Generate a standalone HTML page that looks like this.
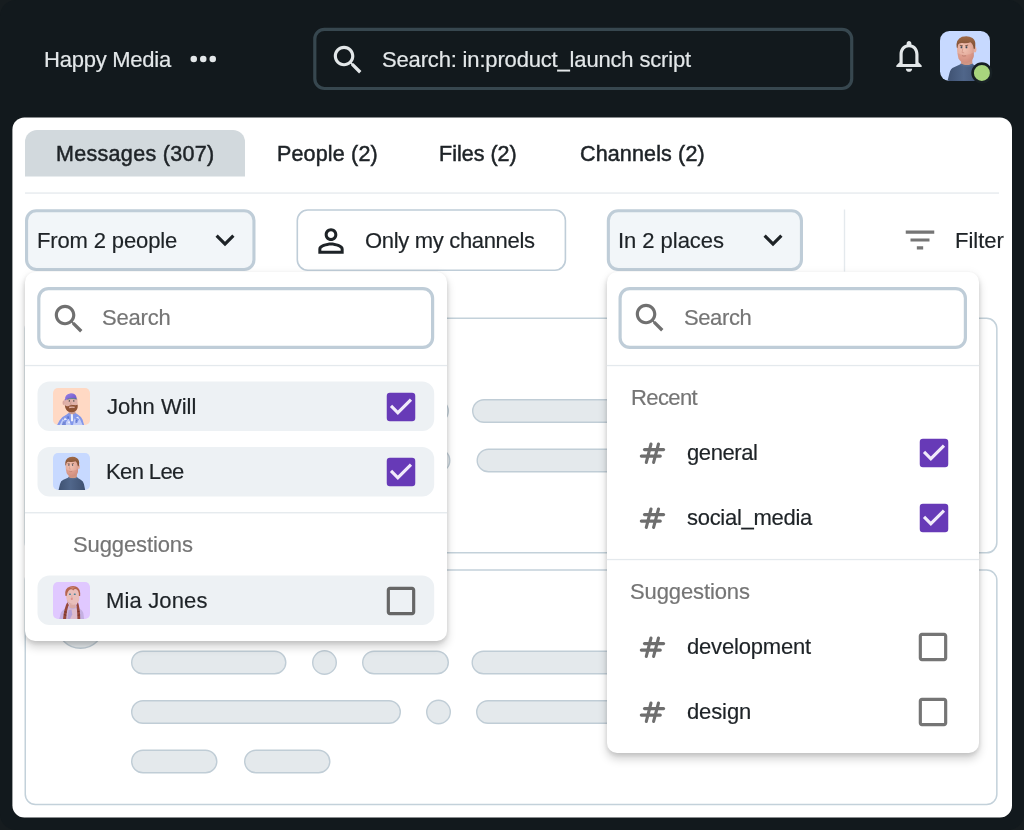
<!DOCTYPE html>
<html><head><meta charset="utf-8"><title>Search</title>
<style>
html,body{margin:0;padding:0;}
body{width:1024px;height:830px;position:relative;overflow:hidden;background:#161c1f;font-family:'Liberation Sans',sans-serif;}
.a{position:absolute;box-sizing:border-box;}
.t{position:absolute;will-change:transform;white-space:pre;line-height:26px;font-family:'Liberation Sans',sans-serif;}
svg{position:absolute;overflow:visible;}
.L{left:0;top:0;width:1024px;height:830px;}
.dd{position:absolute;box-sizing:border-box;background:#fff;border-radius:10px;box-shadow:0 6px 10px rgba(0,0,0,.18),0 2px 5px rgba(0,0,0,.09),0 0 8px rgba(0,0,0,.05);}

</style></head>
<body>
<svg class="L" viewBox="0 0 1024 830"><rect x="0" y="0" width="1024" height="830" rx="16" fill="#12191d"/>
<rect x="314.80" y="29.40" width="536.90" height="59.10" rx="9.70" fill="none" stroke="#37474f" stroke-width="3.2"/>
<circle cx="193.75" cy="59" r="3.25" fill="#e3e7e9"/>
<circle cx="203.25" cy="59" r="3.25" fill="#e3e7e9"/>
<circle cx="212.75" cy="59" r="3.25" fill="#e3e7e9"/>
<rect x="12.4" y="117.6" width="999.6" height="700" rx="12" fill="#fff"/>
<path d="M25 176.6V142a12 12 0 0 1 12-12H233a12 12 0 0 1 12 12V176.6Z" fill="#d2d9dd"/>
<rect x="25" y="192.4" width="974" height="1.3" fill="#e4e9ed"/>
<rect x="26.55" y="210.75" width="227.40" height="58.70" rx="9.75" fill="#f2f6f9" stroke="#bfcdd8" stroke-width="3.1"/>
<rect x="297.30" y="210.00" width="268.10" height="60.20" rx="10.50" fill="#fff" stroke="#bfcdd8" stroke-width="1.6"/>
<rect x="608.35" y="210.75" width="193.10" height="58.70" rx="9.75" fill="#f2f6f9" stroke="#bfcdd8" stroke-width="3.1"/>
<rect x="843.8" y="209.5" width="1.4" height="62" fill="#e4e9ed"/>
<rect x="25.25" y="318.35" width="971.60" height="234.50" rx="10.25" fill="#fff" stroke="#c3d1da" stroke-width="1.5"/>
<rect x="25.25" y="569.95" width="971.60" height="234.50" rx="10.25" fill="#fff" stroke="#c3d1da" stroke-width="1.5"/>
<rect x="424.70" y="399.20" width="23.60" height="23.60" rx="11.80" fill="#e4e9ec" stroke="#c0cdd6" stroke-width="1.4"/>
<rect x="472.70" y="399.70" width="406.60" height="22.60" rx="11.30" fill="#e4e9ec" stroke="#c0cdd6" stroke-width="1.4"/>
<rect x="426.20" y="448.70" width="23.60" height="23.60" rx="11.80" fill="#e4e9ec" stroke="#c0cdd6" stroke-width="1.4"/>
<rect x="477.20" y="449.20" width="402.10" height="22.60" rx="11.30" fill="#e4e9ec" stroke="#c0cdd6" stroke-width="1.4"/>
<rect x="57.20" y="601.70" width="46.60" height="46.60" rx="23.30" fill="#e4e9ec" stroke="#c0cdd6" stroke-width="1.4"/>
<rect x="131.70" y="651.20" width="154.10" height="22.60" rx="11.30" fill="#e4e9ec" stroke="#c0cdd6" stroke-width="1.4"/>
<rect x="312.70" y="650.70" width="23.60" height="23.60" rx="11.80" fill="#e4e9ec" stroke="#c0cdd6" stroke-width="1.4"/>
<rect x="362.70" y="651.20" width="85.60" height="22.60" rx="11.30" fill="#e4e9ec" stroke="#c0cdd6" stroke-width="1.4"/>
<rect x="472.20" y="651.20" width="327.10" height="22.60" rx="11.30" fill="#e4e9ec" stroke="#c0cdd6" stroke-width="1.4"/>
<rect x="131.70" y="700.70" width="268.60" height="22.60" rx="11.30" fill="#e4e9ec" stroke="#c0cdd6" stroke-width="1.4"/>
<rect x="426.70" y="700.20" width="23.60" height="23.60" rx="11.80" fill="#e4e9ec" stroke="#c0cdd6" stroke-width="1.4"/>
<rect x="476.70" y="700.70" width="322.60" height="22.60" rx="11.30" fill="#e4e9ec" stroke="#c0cdd6" stroke-width="1.4"/>
<rect x="131.70" y="750.20" width="85.10" height="22.60" rx="11.30" fill="#e4e9ec" stroke="#c0cdd6" stroke-width="1.4"/>
<rect x="244.70" y="750.20" width="85.10" height="22.60" rx="11.30" fill="#e4e9ec" stroke="#c0cdd6" stroke-width="1.4"/></svg>
<span class="t" style="left:43.50px;top:46.50px;font-size:22px;letter-spacing:-0.239px;color:#e3e7e9;-webkit-text-stroke:0.2px #e3e7e9;">Happy Media</span><span class="t" style="left:381.50px;top:46.50px;font-size:22px;letter-spacing:-0.167px;color:#e3e7e9;-webkit-text-stroke:0.2px #e3e7e9;">Search: in:product_launch script</span>
<svg style="left:328.5px;top:40.5px" width="38" height="38" viewBox="0 0 24 24"><path fill="#e3e7e9" d="M15.5 14h-.79l-.28-.27C15.41 12.59 16 11.11 16 9.5 16 5.91 13.09 3 9.5 3S3 5.91 3 9.5 5.91 16 9.5 16c1.61 0 3.09-.59 4.23-1.57l.27.28v.79l5 4.99L20.49 19l-4.99-5zm-6 0C7.01 14 5 11.99 5 9.5S7.01 5 9.5 5 14 7.01 14 9.5 11.99 14 9.5 14z"/></svg>
<svg style="left:890.2px;top:36.5px" width="38" height="38" viewBox="0 0 24 24"><path fill="#e3e7e9" d="M12 22c1.1 0 2-.9 2-2h-4c0 1.1.9 2 2 2zm6-6v-5c0-3.07-1.63-5.64-4.5-6.32V4c0-.83-.67-1.5-1.5-1.5s-1.5.67-1.5 1.5v.68C7.64 5.36 6 7.92 6 11v5l-2 2v1h16v-1l-2-2zm-2 1H8v-6c0-2.48 1.51-4.5 4-4.5s4 2.02 4 4.5v6z"/></svg>
<svg style="left:940px;top:30.6px" width="50" height="50" viewBox="0 0 50 50"><g clip-path="url(#avc)"><use href="#ken"/></g></svg>
<svg class="L" viewBox="0 0 1024 830"><circle cx="981.9" cy="72.9" r="9.3" fill="#a8d57d" stroke="#172024" stroke-width="2.6"/></svg>
<span class="t" style="left:56.00px;top:141.25px;font-size:21.5px;letter-spacing:0.308px;color:#1e2327;-webkit-text-stroke:0.5px #1e2327;">Messages (307)</span><span class="t" style="left:276.50px;top:141.25px;font-size:21.5px;letter-spacing:0.163px;color:#1e2327;-webkit-text-stroke:0.5px #1e2327;">People (2)</span><span class="t" style="left:439.00px;top:141.25px;font-size:21.5px;letter-spacing:0.002px;color:#1e2327;-webkit-text-stroke:0.5px #1e2327;">Files (2)</span><span class="t" style="left:580.00px;top:141.25px;font-size:21.5px;letter-spacing:0.143px;color:#1e2327;-webkit-text-stroke:0.5px #1e2327;">Channels (2)</span><span class="t" style="left:37.00px;top:227.50px;font-size:22px;letter-spacing:-0.135px;color:#1e2327;-webkit-text-stroke:0.2px #1e2327;">From 2 people</span><span class="t" style="left:364.50px;top:227.50px;font-size:22px;letter-spacing:-0.323px;color:#1e2327;-webkit-text-stroke:0.2px #1e2327;">Only my channels</span><span class="t" style="left:618.00px;top:227.50px;font-size:22px;letter-spacing:-0.040px;color:#1e2327;-webkit-text-stroke:0.2px #1e2327;">In 2 places</span><span class="t" style="left:954.50px;top:227.50px;font-size:22px;letter-spacing:-0.012px;color:#1e2327;-webkit-text-stroke:0.2px #1e2327;">Filter</span>
<svg style="left:206px;top:221.4px" width="38" height="38" viewBox="0 0 24 24"><path fill="#1e2327" d="M16.59 8.59L12 13.17 7.41 8.59 6 10l6 6 6-6z"/></svg>
<svg style="left:753.5px;top:221.4px" width="38" height="38" viewBox="0 0 24 24"><path fill="#1e2327" d="M16.59 8.59L12 13.17 7.41 8.59 6 10l6 6 6-6z"/></svg>
<svg style="left:311.6px;top:221.5px" width="38" height="38" viewBox="0 0 24 24"><path fill="#1e2327" d="M12 5.9c1.16 0 2.1.94 2.1 2.1s-.94 2.1-2.1 2.1S9.9 9.16 9.9 8s.94-2.1 2.1-2.1m0 9c2.97 0 6.1 1.46 6.1 2.1v1.1H5.9V17c0-.64 3.13-2.1 6.1-2.1M12 4C9.79 4 8 5.79 8 8s1.79 4 4 4 4-1.79 4-4-1.79-4-4-4zm0 9c-2.67 0-8 1.34-8 4v3h16v-3c0-2.66-5.33-4-8-4z"/></svg>
<svg style="left:901.25px;top:221.25px" width="38" height="38" viewBox="0 0 24 24"><path fill="#757575" d="M10 18h4v-2h-4v2zM3 6v2h18V6H3zm3 7h12v-2H6v2z"/></svg>
<div class="dd" style="left:25px;top:271.5px;width:422px;height:369px"></div>
<div class="dd" style="left:606.7px;top:271.5px;width:372.6px;height:481px"></div>
<svg class="L" viewBox="0 0 1024 830"><rect x="38.80" y="288.60" width="393.80" height="58.80" rx="9.70" fill="#fff" stroke="#bfcdd8" stroke-width="3.2"/>
<rect x="25" y="364.9" width="422" height="1.3" fill="#e4e9ed"/>
<rect x="37.5" y="381.4" width="396.7" height="49.6" rx="12" fill="#edf1f4"/>
<rect x="37.5" y="446.9" width="396.7" height="49.6" rx="12" fill="#edf1f4"/>
<rect x="37.5" y="575.5" width="396.7" height="49.6" rx="12" fill="#edf1f4"/>
<rect x="25" y="512.1" width="422" height="1.3" fill="#e4e9ed"/>
<rect x="620.10" y="288.60" width="345.30" height="58.80" rx="9.70" fill="#fff" stroke="#bfcdd8" stroke-width="3.2"/>
<rect x="606.7" y="364.9" width="372.6" height="1.3" fill="#e4e9ed"/>
<rect x="606.7" y="558.9" width="372.6" height="1.3" fill="#e4e9ed"/>
<use href="#hash" y="0"/>
<use href="#hash" y="65"/>
<use href="#hash" y="194"/>
<use href="#hash" y="259"/></svg>
<svg style="left:49.5px;top:299.5px" width="38" height="38" viewBox="0 0 24 24"><path fill="#707070" d="M15.5 14h-.79l-.28-.27C15.41 12.59 16 11.11 16 9.5 16 5.91 13.09 3 9.5 3S3 5.91 3 9.5 5.91 16 9.5 16c1.61 0 3.09-.59 4.23-1.57l.27.28v.79l5 4.99L20.49 19l-4.99-5zm-6 0C7.01 14 5 11.99 5 9.5S7.01 5 9.5 5 14 7.01 14 9.5 11.99 14 9.5 14z"/></svg>
<svg style="left:630.6px;top:299.3px" width="38" height="38" viewBox="0 0 24 24"><path fill="#707070" d="M15.5 14h-.79l-.28-.27C15.41 12.59 16 11.11 16 9.5 16 5.91 13.09 3 9.5 3S3 5.91 3 9.5 5.91 16 9.5 16c1.61 0 3.09-.59 4.23-1.57l.27.28v.79l5 4.99L20.49 19l-4.99-5zm-6 0C7.01 14 5 11.99 5 9.5S7.01 5 9.5 5 14 7.01 14 9.5 11.99 14 9.5 14z"/></svg>
<span class="t" style="left:102.00px;top:305.00px;font-size:22px;letter-spacing:-0.194px;color:#757575;-webkit-text-stroke:0.2px #757575;">Search</span><span class="t" style="left:106.50px;top:394.00px;font-size:22px;letter-spacing:0.018px;color:#1e2327;-webkit-text-stroke:0.2px #1e2327;">John Will</span><span class="t" style="left:105.50px;top:459.00px;font-size:22px;letter-spacing:-0.621px;color:#1e2327;-webkit-text-stroke:0.2px #1e2327;">Ken Lee</span><span class="t" style="left:73.00px;top:531.50px;font-size:22px;letter-spacing:-0.109px;color:#757575;-webkit-text-stroke:0.2px #757575;">Suggestions</span><span class="t" style="left:105.50px;top:587.50px;font-size:22px;letter-spacing:0.154px;color:#1e2327;-webkit-text-stroke:0.2px #1e2327;">Mia Jones</span><span class="t" style="left:683.50px;top:305.00px;font-size:22px;letter-spacing:-0.394px;color:#757575;-webkit-text-stroke:0.2px #757575;">Search</span><span class="t" style="left:630.50px;top:384.50px;font-size:22px;letter-spacing:-0.619px;color:#757575;-webkit-text-stroke:0.2px #757575;">Recent</span><span class="t" style="left:687.00px;top:440.00px;font-size:22px;letter-spacing:-0.417px;color:#1e2327;-webkit-text-stroke:0.2px #1e2327;">general</span><span class="t" style="left:687.00px;top:505.00px;font-size:22px;letter-spacing:-0.288px;color:#1e2327;-webkit-text-stroke:0.2px #1e2327;">social_media</span><span class="t" style="left:630.00px;top:578.50px;font-size:22px;letter-spacing:-0.109px;color:#757575;-webkit-text-stroke:0.2px #757575;">Suggestions</span><span class="t" style="left:687.00px;top:633.50px;font-size:22px;letter-spacing:-0.186px;color:#1e2327;-webkit-text-stroke:0.2px #1e2327;">development</span><span class="t" style="left:687.00px;top:698.50px;font-size:22px;letter-spacing:-0.119px;color:#1e2327;-webkit-text-stroke:0.2px #1e2327;">design</span>
<svg style="left:52.9px;top:387.9px" width="37" height="37" viewBox="0 0 50 50"><g clip-path="url(#avs)"><use href="#john"/></g></svg>
<svg style="left:52.9px;top:452.9px" width="37" height="37" viewBox="0 0 50 50"><g clip-path="url(#avs)"><use href="#ken"/></g></svg>
<svg style="left:52.9px;top:581.8px" width="37" height="37" viewBox="0 0 50 50"><g clip-path="url(#avs)"><use href="#mia"/></g></svg>
<svg style="left:381.65px;top:387.75px" width="38" height="38" viewBox="0 0 24 24"><use href="#cbon"/></svg>
<svg style="left:381.65px;top:453.0px" width="38" height="38" viewBox="0 0 24 24"><use href="#cbon"/></svg>
<svg style="left:381.65px;top:581.5px" width="38" height="38" viewBox="0 0 24 24"><use href="#cboff" fill="#666"/></svg>
<svg style="left:914.6px;top:434px" width="38" height="38" viewBox="0 0 24 24"><use href="#cbon"/></svg>
<svg style="left:914.6px;top:499px" width="38" height="38" viewBox="0 0 24 24"><use href="#cbon"/></svg>
<svg style="left:914.0px;top:628px" width="38" height="38" viewBox="0 0 24 24"><use href="#cboff" fill="#757575"/></svg>
<svg style="left:914.0px;top:693px" width="38" height="38" viewBox="0 0 24 24"><use href="#cboff" fill="#757575"/></svg>
<svg width="0" height="0" style="left:0;top:0">
<defs>
<g id="cbon"><rect x="3" y="3" width="18" height="18" rx="2" fill="#673ab7"/><path fill="#f1ebfa" d="M10 17l-5-5 1.410-1.410L10 14.170l7.590-7.590L19 8l-9 9z"/></g>
<path id="cboff" d="M19 5v14H5V5h14m0-2H5c-1.100 0-2 .9-2 2v14c0 1.100.9 2 2 2h14c1.100 0 2-.9 2-2V5c0-1.100-.9-2-2-2z"/>
<g id="hash" stroke="#6e6e6e" stroke-width="3.1" stroke-linecap="round" fill="none">
<line x1="644.500" y1="449.600" x2="663.600" y2="449.600"/><line x1="641.300" y1="456.100" x2="660.300" y2="456.100"/>
<line x1="651" y1="444" x2="646.300" y2="462.400"/><line x1="658.500" y1="444" x2="653.600" y2="462.400"/></g>
<clipPath id="avc"><rect x="0" y="0" width="50" height="50" rx="9.5"/></clipPath>
<clipPath id="avs"><rect x="0" y="0" width="50" height="50" rx="6.8"/></clipPath>
<radialGradient id="gskin" cx="0.42" cy="0.35" r="0.75"><stop offset="0" stop-color="#f1c3b3"/><stop offset="0.6" stop-color="#e3aa9a"/><stop offset="1" stop-color="#c98f80"/></radialGradient>
<linearGradient id="gsw" x1="0" y1="0" x2="1" y2="0"><stop offset="0" stop-color="#3f5272"/><stop offset="0.45" stop-color="#50668a"/><stop offset="1" stop-color="#3e5070"/></linearGradient>
<linearGradient id="ghair" x1="0" y1="0" x2="0" y2="1"><stop offset="0" stop-color="#a06a48"/><stop offset="1" stop-color="#7a4a30"/></linearGradient>
<g id="ken">
<rect width="50" height="50" fill="#c7d9ff"/>
<path d="M7.5 50 L9.5 42 Q10.5 37.500 14 36.200 L21 33 L32.500 33 L37.500 36 Q41 37.500 41.800 42 L43.500 50 Z" fill="url(#gsw)"/>
<path d="M21.300 27 L32.200 27 L32.400 33.200 Q27 35.500 21 33.200 Z" fill="#cf9684"/>
<path d="M20.600 32.600 Q27 35.800 32.800 32.600 L33 34.300 Q27 37.300 20.400 34.300Z" fill="#566c90"/>
<ellipse cx="34.900" cy="18.600" rx="1.500" ry="3" fill="#e5ad9d"/>
<path d="M16.900 13 Q17.500 9.500 25 9.500 Q33 9.500 33.900 14 L33.800 25 Q33 30.500 27 31.700 Q20.500 32 18.600 27.500 Q16.800 22 16.900 13 Z" fill="url(#gskin)"/>
<path d="M17.6 22 Q21 24.500 26 24 Q30 23.500 33.800 21.500 L33.800 25 Q33 30.500 27 31.700 Q20.500 32 18.600 27.500 Z" fill="#cf8272" opacity=".38"/>
<path d="M16.700 16.500 Q15.500 8.500 22 5.800 Q28 4 32.500 7 Q36 9.500 35.300 15 L34.600 18.200 L33.600 17.600 Q33.500 13.500 30.500 11.200 Q27 12.800 22.500 12 Q19 11.600 18.200 13.500 Q17.600 15 17.600 17 Z" fill="url(#ghair)"/>
<rect x="20.600" y="15.300" width="1.700" height="1.900" rx=".5" fill="#3c4858"/><rect x="25.600" y="15.300" width="1.700" height="1.900" rx=".5" fill="#3c4858"/>
<path d="M19.800 14.300 L22.800 14.800 M25.200 14.800 L28.200 14.100" stroke="#6b4230" stroke-width=".8" fill="none"/>
<path d="M22 24.600 Q23.500 25.600 26 24.800" stroke="#b87a6c" stroke-width=".8" fill="none"/>
<path d="M22.800 17.500 L22 21.500 L24.200 21.800" stroke="#d49a8a" stroke-width=".9" fill="none"/>
</g>
<linearGradient id="gcap" x1="0" y1="0" x2="1" y2="1"><stop offset="0" stop-color="#9a84e6"/><stop offset="1" stop-color="#6a50c8"/></linearGradient>
<g id="john">
<rect width="50" height="50" fill="#ffd9c4"/>
<path d="M5.500 50 L9 43.500 Q12 38.500 18 36 L21.500 33.500 L30 33.500 L34 36 Q38.500 38.500 40 43 L42 50 Z" fill="#8397ea"/>
<path d="M9 50 L13 42 L17 47 L21 41 L24 50Z M27 50 L29 41 L33 46 L36 41 L40 50Z" fill="#c9d3fa" opacity=".9"/><path d="M14 44 L16 40 L19 43Z M31 40 L34 38.500 L35.500 42Z M20 47 L22 44 L23.500 48Z" fill="#eef1fd" opacity=".9"/>
<path d="M12 50 L13.500 45 L17 45.500 L17.500 50Z M30 44 L32.500 43 L33 47 L30.500 47.500Z M19 39 L21 38 L22 41.500 L20 42Z" fill="#3f5ac0" opacity=".6"/>
<path d="M24 34 L26.800 34 L27.300 45 L24.300 45 Z" fill="#eef0fa"/>
<path d="M21.500 31 L30 31 L30.500 34.200 Q26 36.500 21.300 34.200Z" fill="#c99a90"/>
<ellipse cx="14.600" cy="20" rx="1.700" ry="3" fill="#d9a79e"/>
<path d="M15.200 15 L33 14.500 L33.300 24 Q33 30 26 32 Q18.500 31.500 16.500 26 Q15 22 15.200 15Z" fill="#dfb1a8"/>
<path d="M16 23 Q18 25.500 20.500 24.500 Q24 22.300 28.500 23 Q31 23.500 33.300 22.500 Q34 29 30 31.500 Q26 33.500 21 32 Q16.500 30 16 23Z" fill="#8f5335"/>
<path d="M21.500 25.500 Q25 24.300 29.500 25.300 L29 27 Q25 26.300 22 27.200Z" fill="#e2b2a8"/>
<path d="M16.300 15.800 Q15.800 8.500 23 7.300 Q30.500 6.800 31.800 12.500 L32 15.200 Q25 13.300 18.500 15.500 L15.500 17.300 Z" fill="url(#gcap)"/>
<path d="M19.500 14.600 Q25 12.800 31.900 14.300 L32 15.500 Q25 14 19 15.800Z" fill="#3e7a6c" opacity=".7"/>
<rect x="21.200" y="16.600" width="1.800" height="1.800" rx=".5" fill="#2f3a3a"/><rect x="27.200" y="16.600" width="1.800" height="1.800" rx=".5" fill="#2f3a3a"/>
<path d="M24.500 18 L23.500 22 L26 22.300" stroke="#c9958b" stroke-width="1" fill="none"/>
</g>
<g id="mia">
<rect width="50" height="50" fill="#e0c8ff"/>
<path d="M8.500 50 L10.500 42 Q12.500 37 19 35 L22 33.500 L31 33.500 L34 35 Q39.500 37 41 42 L42 50 Z" fill="#c4b0e2"/>
<path d="M20.500 35 Q26 39 32 35 L34.500 50 L18.500 50 Z" fill="#ddbccc"/>
<path d="M21 38 L25 37 L26 44 L23 50 L19.500 50 Z" fill="#a89bdc" opacity=".75"/><path d="M22.300 27 L30.500 27 L31 34 Q26.500 37.500 22 34Z" fill="#d9a9a4"/>
<path d="M17.600 14 Q18 9 26 8.500 Q34.500 9 35.600 14 L35.400 24 Q34.500 29.500 28.500 30.800 Q22 31 19.500 27 Q17.500 23 17.600 14 Z" fill="#e9beba"/>
<path d="M19 24 Q21 29 27 29.800 Q23 31.500 20 28Z" fill="#d4a5a0" opacity=".8"/>
<path d="M16.600 18.500 Q15 8.500 23 6 Q27 5 31 6 Q37.500 8.500 36.700 18.800 L35 19 Q35.500 12 31.500 9.800 Q29 9 27.300 11.500 Q26 9.500 24 9.800 Q19.500 11 18.500 19Z" fill="#b5654f"/>
<path d="M22 7 Q25.500 5.800 30 6.800 Q27.500 8 26.800 10.500 Q25.500 8 22 7Z" fill="#d08a72" opacity=".7"/>
<path d="M19.300 27.500 Q15 35 13.600 50 L17.800 50 Q18.200 38 21.500 31 Z" fill="#97483a"/>
<path d="M33.800 27.500 Q36.500 35 36.800 50 L33 50 Q32.800 38 31.500 31 Z" fill="#97483a"/>
<path d="M15.500 40 L18.500 41 M14.700 44 L18 45 M33.300 40 L36.200 39.500 M33.300 45 L36.600 44.500" stroke="#5f2419" stroke-width=".8"/>
<rect x="21.500" y="15.600" width="2.800" height="1.800" rx=".8" fill="#4a8299"/><rect x="28" y="15.600" width="2.800" height="1.800" rx=".8" fill="#4a8299"/>
<path d="M25.800 17.500 L25 21 L27 21.300" stroke="#d7a5a0" stroke-width=".9" fill="none"/>
<rect x="24" y="22.200" width="2.800" height="1.300" rx=".6" fill="#d76a62"/>
</g>
</defs></svg>


</body></html>
